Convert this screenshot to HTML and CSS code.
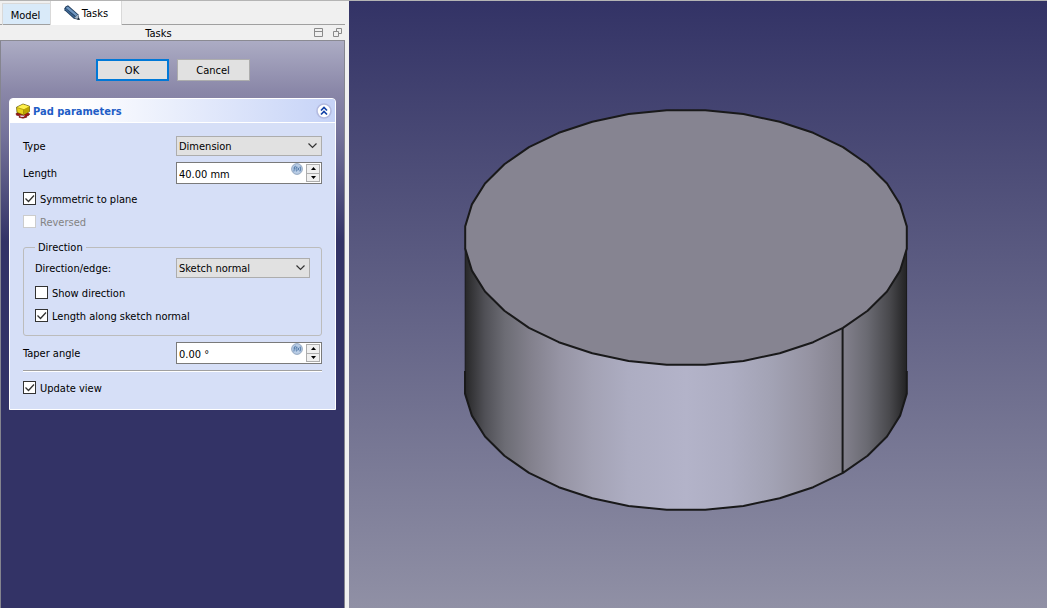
FILE: index.html
```html
<!DOCTYPE html>
<html lang="en">
<head>
<meta charset="utf-8">
<title>Pad parameters</title>
<link rel="stylesheet" href="styles.css">
</head>
<body>
<div class="app">
  <aside class="dock">
    <nav class="tabs">
      <button class="tab" type="button"><span class="text">Model</span></button>
      <button class="tab tab-active" type="button">
        <svg class="tab-icon" width="16" height="16" viewBox="0 0 16 16" aria-hidden="true">
          <path d="M.3 3.500Q1 1 4 .3L14.200 9.200 15.700 15 9.800 13.800 .5 5.200z" fill="#1f3c5c"/>
          <path d="M1.800 2.900Q2.500 1.700 4 1.400L13.200 9.400 11.900 11.300z" fill="#6f97c2"/>
          <path d="M1.300 4 10.700 12.500" stroke="#3d6795" stroke-width="1.500"/>
          <path d="m10.300 13 3.400-3.500 1.400 5z" fill="#a3b4c4"/>
          <path d="m12.900 14.200 1.800-1.700 1 2.500z" fill="#14202c"/>
        </svg>
        <span class="text">Tasks</span>
      </button>
    </nav>
    <header class="dock-title">
      <span class="dock-name text">Tasks</span>
      <button class="dock-button" type="button" aria-label="Shade">
        <svg width="9" height="9" viewBox="0 0 9 9"><path d="M.5.5h8v8h-8zM.5 3.500h8" fill="none" stroke="#8a8a8a"/></svg>
      </button>
      <button class="dock-button" type="button" aria-label="Float">
        <svg width="9" height="9" viewBox="0 0 9 9"><path d="M.5 3.500h5v5h-5zM3.500 3V.5h5v5H6" fill="none" stroke="#8a8a8a"/></svg>
      </button>
    </header>
    <form class="panel">
      <div class="actions">
        <button class="push push-default" type="button">OK</button>
        <button class="push" type="button">Cancel</button>
      </div>
      <section class="card">
        <header class="card-head">
          <svg width="16" height="16" viewBox="0 0 16 16" aria-hidden="true">
            <path d="M1 10.500 5 9l7 .3 2.800 1.700-1.500 1.700-2 .3.500 1.200-3.800 1-4-.9.500-1.600-3-.5z" fill="#a31515" stroke="#5a0808" stroke-width=".6"/>
            <path d="M4.500 12.500h5.500l-1.500 1.400H6z" fill="#d9d3ee"/>
            <path d="M1.500 4.200 8 1l6.500 2.200v5.300L8.500 12 2 9.500z" fill="#e8d21c" stroke="#5b4f00" stroke-width=".7"/>
            <path d="M1.900 4.400 8 1.500l6 1.900-5.500 3z" fill="#fff04c"/>
            <path d="M8.500 6.500 14.200 3.600v4.800L8.500 11.600z" fill="#bca400"/>
            <path d="M1.800 4.500 8.500 6.500v5" fill="none" stroke="#8e7d06" stroke-width=".6"/>
          </svg>
          <h1 class="card-title text">Pad parameters</h1>
          <button class="collapse" type="button" aria-label="Collapse">
            <svg width="16" height="16" viewBox="0 0 16 16">
              <circle cx="8" cy="8" r="7" fill="#fff" stroke="#b4bbe0" stroke-width="1.600"/>
              <path d="m5 7.500 3-3 3 3M5 11.500l3-3 3 3" fill="none" stroke="#1443a8" stroke-width="1.700"/>
            </svg>
          </button>
        </header>
        <div class="card-body">
          <div class="row">
            <label class="text" for="type">Type</label>
            <select class="combo" id="type"><option>Dimension</option></select>
          </div>
          <div class="row row-length">
            <label class="text" for="length">Length</label>
            <div class="spin">
              <input class="spin-input" id="length" type="text" value="40.00 mm">
              <button class="fx" type="button" aria-label="Expression">
                <svg width="12" height="12" viewBox="0 0 12 12"><circle cx="6" cy="6" r="5.400" fill="#b9cde6" stroke="#8499b5" stroke-width=".8"/><path d="M4.800 3.200q-1-.4-1.300 1L2.900 8.500M2.600 5h2M5.800 3.500Q4.600 6 5.400 8.500M6.600 4.500l1.600 3M8.300 4.500l-1.900 3M9.200 3.500q1.100 2.500-.2 5" fill="none" stroke="#456f9f" stroke-width=".8"/></svg>
              </button>
              <div class="steps">
                <button class="step" type="button" aria-label="Increase"><svg width="5" height="3" viewBox="0 0 5 3"><path d="M0 3 2.500 0 5 3z"/></svg></button>
                <button class="step" type="button" aria-label="Decrease"><svg width="5" height="3" viewBox="0 0 5 3"><path d="M0 0 2.500 3 5 0z"/></svg></button>
              </div>
            </div>
          </div>
          <label class="check check-symmetric"><input class="box" type="checkbox" checked><span class="text">Symmetric to plane</span></label>
          <label class="check check-disabled"><input class="box" type="checkbox" disabled><span class="text">Reversed</span></label>
          <fieldset class="group">
            <legend class="legend">Direction</legend>
            <div class="row">
              <label class="text" for="edge">Direction/edge:</label>
              <select class="combo" id="edge"><option>Sketch normal</option></select>
            </div>
            <label class="check check-first"><input class="box" type="checkbox"><span class="text">Show direction</span></label>
            <label class="check"><input class="box" type="checkbox" checked><span class="text">Length along sketch normal</span></label>
          </fieldset>
          <div class="row row-taper">
            <label class="text" for="taper">Taper angle</label>
            <div class="spin">
              <input class="spin-input" id="taper" type="text" value="0.00 °">
              <button class="fx" type="button" aria-label="Expression">
                <svg width="12" height="12" viewBox="0 0 12 12"><circle cx="6" cy="6" r="5.400" fill="#b9cde6" stroke="#8499b5" stroke-width=".8"/><path d="M4.800 3.200q-1-.4-1.300 1L2.900 8.500M2.600 5h2M5.800 3.500Q4.600 6 5.400 8.500M6.600 4.500l1.600 3M8.300 4.500l-1.900 3M9.200 3.500q1.100 2.500-.2 5" fill="none" stroke="#456f9f" stroke-width=".8"/></svg>
              </button>
              <div class="steps">
                <button class="step" type="button" aria-label="Increase"><svg width="5" height="3" viewBox="0 0 5 3"><path d="M0 3 2.500 0 5 3z"/></svg></button>
                <button class="step" type="button" aria-label="Decrease"><svg width="5" height="3" viewBox="0 0 5 3"><path d="M0 0 2.500 3 5 0z"/></svg></button>
              </div>
            </div>
          </div>
          <hr class="rule">
          <label class="check check-update"><input class="box" type="checkbox" checked><span class="text">Update view</span></label>
        </div>
      </section>
    </form>
  </aside>
  <main class="view">
    <svg class="scene" viewBox="349 1 698 607" role="img" aria-label="Cylinder">
      <defs>
        <linearGradient id="side" gradientUnits="userSpaceOnUse" x1="465" y1="0" x2="907" y2="0">
          <stop offset="0" stop-color="#272728"/>
          <stop offset=".045" stop-color="#505056"/>
          <stop offset=".09" stop-color="#6c6c74"/>
          <stop offset=".15" stop-color="#83818d"/>
          <stop offset=".215" stop-color="#9694a4"/>
          <stop offset=".285" stop-color="#a3a2b4"/>
          <stop offset=".37" stop-color="#adadc2"/>
          <stop offset=".5" stop-color="#b3b3c9"/>
          <stop offset=".6" stop-color="#adadc2"/>
          <stop offset=".69" stop-color="#a3a3b5"/>
          <stop offset=".78" stop-color="#9593a2"/>
          <stop offset=".855" stop-color="#83818d"/>
          <stop offset=".91" stop-color="#6a6a72"/>
          <stop offset=".96" stop-color="#49494d"/>
          <stop offset="1" stop-color="#222223"/>
        </linearGradient>
      </defs>
      <path fill="url(#side)" d="M465.200 238V393.600L471.900 415.600 485 436.500 504.400 455.800 529 472.900 558.800 487.200 592.300 498.300 628.600 505.900 666.700 509.800H705.300L743.400 505.900 779.700 498.300 813.200 487.200 843 472.900 867.600 455.800 887 436.500 900.100 415.600 906.700 393.600V238z"/>
      <path fill="none" stroke="#19191a" stroke-width="1" d="M465.200 248V371M906.600 248V371"/>
      <path fill="none" stroke="#19191a" stroke-width="2" stroke-linejoin="round" d="M465 371V393.600L471.900 415.600 485 436.500 504.400 455.800 529 472.900 558.800 487.200 592.300 498.300 628.600 505.900 666.700 509.800H705.300L743.400 505.900 779.700 498.300 813.200 487.200 843 472.900 867.600 455.800 887 436.500 900.100 415.600 906.800 393.600V371M842.600 472.900V328"/>
      <path fill="#868491" stroke="#19191a" stroke-width="2" stroke-linejoin="round" d="M906.800 226.400 900.100 204.400 887 183.500 867.600 164.200 843 147.100 813.200 132.800 779.700 121.700 743.400 114.100 705.300 110.300H666.700L628.600 114.100 592.300 121.700 558.800 132.800 529 147.100 504.400 164.200 485 183.500 471.900 204.400 465.200 226.400V248.600L471.900 270.600 485 291.500 504.400 310.800 529 327.900 558.800 342.200 592.300 353.300 628.600 360.900 666.700 364.800H705.300L743.400 360.900 779.700 353.300 813.200 342.200 843 327.900 867.600 310.800 887 291.500 900.100 270.600 906.800 248.600z"/>
    </svg>
  </main>
</div>
</body>
</html>
```
FILE: styles.css
```css
* { box-sizing: border-box; }

body {
  margin: 0;
  font: 11px/14px "DejaVu Sans Condensed", "DejaVu Sans", sans-serif;
  color: #000;
}

button, input, select { margin: 0; font: inherit; color: inherit; border-radius: 0; }
button { padding: 0; border: 0; background: none; }
svg { display: block; }
.text { padding-top: 2px; }

.app {
  display: flex;
  height: 100vh;
  background: #f0f0f0;
  border-top: 1px solid #b4b4b4;
}

.dock {
  display: flex;
  flex-direction: column;
  flex: none;
  width: 345px;
  margin-right: 4px;
}

.tabs {
  display: flex;
  align-items: flex-end;
  height: 24px;
  padding-left: 2px;
  box-shadow: inset 0 -1px #a0a0a0;
}

.tab {
  display: flex;
  align-items: center;
  justify-content: center;
  gap: 2px;
  width: 48px;
  height: 22px;
  padding-right: 2px;
  background: #d9eaf9;
  border: solid #d9d9d9;
  border-width: 1px 0 0 1px;
  box-shadow: inset 0 -1px #a0a0a0;
}

.tab-active {
  width: 72px;
  height: 24px;
  padding: 0;
  background: #fff;
  border-width: 0 1px;
  box-shadow: none;
}

.dock-title {
  display: flex;
  align-items: center;
  gap: 10px;
  height: 16px;
  padding: 0 3px 1px 13px;
  box-shadow: inset 0 -1px #8a8a92;
}

.dock-name { flex: 1; text-align: center; }

.panel {
  flex: 1;
  padding: 18px 8px 8px;
  border: solid #85858f;
  border-width: 0 1px;
  background: #333366 linear-gradient(#acacc4, #8a87a8 50px, #74729a 95px, #333366 200px) no-repeat top / 100% 200px;
}

.actions { display: flex; justify-content: center; gap: 8px; }

.push {
  width: 73px;
  height: 22px;
  padding-top: 2px;
  background: #e1e1e1;
  border: 1px solid #adadad;
}

.push-default { border: 2px solid #0078d7; }

.card {
  margin-top: 17px;
  border: 1px solid #fff;
  border-radius: 4px 4px 0 0;
  background: #d6dff7;
}

.card-head {
  display: flex;
  align-items: center;
  gap: 2px;
  height: 24px;
  padding: 0 3px 0 5px;
  border-bottom: 1px solid #fff;
  border-radius: 3px 3px 0 0;
  background: linear-gradient(to right, #fff 20%, #c6d3f7);
}

.card-title {
  flex: 1;
  margin: 0;
  font-size: 11px;
  line-height: 14px;
  color: #215dc6;
}

.card-body { padding: 13px 13px 15px; }

.row { display: grid; grid-template-columns: 153px 1fr; align-items: center; }
.row-length, .row-taper { margin-top: 6px; }

.combo {
  width: 100%;
  height: 20px;
  padding: 2px 2px 0;
  appearance: none;
  border: 1px solid #adadad;
  background: #e1e1e1 url("data:image/svg+xml,%3Csvg xmlns='http://www.w3.org/2000/svg' width='9' height='6'%3E%3Cpath d='M.5.5l4 4 4-4' fill='none' stroke='%23333' stroke-width='1.200'/%3E%3C/svg%3E") no-repeat right 4px center;
}

.spin {
  display: flex;
  position: relative;
  height: 22px;
  padding: 1px;
  border: 1px solid #7a7a7a;
  background: #fff;
}

.spin-input {
  flex: 1;
  min-width: 0;
  padding: 3px 1px 0;
  border: 0;
  background: none;
}

.fx { position: absolute; top: 0; right: 18px; }

.steps { display: flex; flex-direction: column; width: 14px; }

.step {
  display: flex;
  flex: 1;
  align-items: center;
  justify-content: center;
  border: 1px solid #adadad;
  background: #f0f0f0;
}

.step + .step { border-top: 0; }

.check { display: flex; align-items: center; gap: 4px; height: 13px; margin-top: 10px; }
.check-symmetric, .check-first { margin-top: 8px; }
.check-update { margin-top: 9px; }
.check-disabled { color: #838383; }

.box {
  width: 13px;
  height: 13px;
  appearance: none;
  border: 1px solid #333;
  background: #fff;
}

.box:checked {
  background: #fff url("data:image/svg+xml,%3Csvg xmlns='http://www.w3.org/2000/svg' width='11' height='11'%3E%3Cpath d='M1.500 5.500l3 3 5.500-6' fill='none' stroke='%23333' stroke-width='1.300'/%3E%3C/svg%3E") no-repeat center;
}

.box:disabled { border-color: #ccc; }

.group {
  min-width: 0;
  margin: 11px 0 0;
  padding: 3px 11px 13px;
  border: 1px solid #bcbcbc;
  border-radius: 3px;
}

.group .row { grid-template-columns: 141px 1fr; }
.legend { padding: 2px 3px 0; }

.rule {
  height: 2px;
  margin: 6px 0 0;
  border: solid;
  border-width: 1px 0;
  border-color: #a0a0a0 transparent #fff;
}

.view {
  flex: 1;
  min-width: 0;
  background: linear-gradient(#333366, #9090a5);
}

.scene { width: 100%; height: 100%; }
```
